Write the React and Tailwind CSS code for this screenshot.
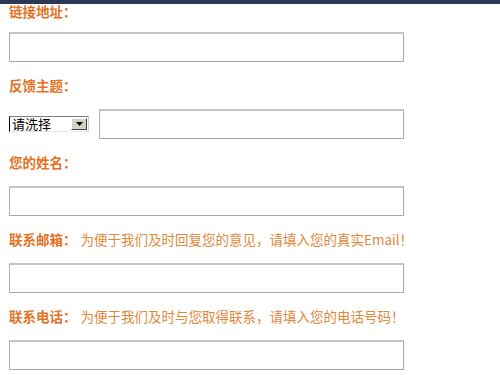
const font = { fontFamily: '"Noto Sans CJK SC", "Noto Sans", sans-serif' };

function TextBox({ className = '' }) {
  return (
    <div
      className={`h-[30px] bg-white border border-[#a9a9a9] border-t-2 border-t-[#c4c4c4] border-l-[#b0b0b0] ${className}`}
    />
  );
}

function Label({ title, hint }) {
  return (
    <div className="mt-[13px] h-[20px] leading-[20px] text-[13.5px] whitespace-nowrap">
      <span className="font-bold text-[#e4721f]">{title}：</span>
      {hint && <span className="ml-[4px] text-[#e2883a]">{hint}</span>}
    </div>
  );
}

export default function App() {
  return (
    <div className="w-[500px] h-[375px] bg-white overflow-hidden" style={font}>
      <div className="h-[4px] bg-[#293956]" />
      <div className="pl-[9px]">
        <div className="h-[14px] leading-[14px] text-[13.5px] font-bold text-[#e4721f]">链接地址：</div>
        <TextBox className="mt-[14px] w-[395px]" />

        <Label title="反馈主题" />
        <div className="mt-[14px] flex items-center h-[30px]">
          <div className="w-[80px] h-[16px] flex items-center bg-white border border-l-black border-t-[#808080] border-r-[#d4d0c8] border-b-[#e8e8e8]">
            <span className="flex-1 pl-[2px] text-[13px] leading-[14px] text-black">请洗择</span>
            <div className="w-[16px] h-[12px] mr-[1px] bg-[#d4d0c8] border border-t-white border-l-white border-r-[#404040] border-b-[#404040] flex items-center justify-center">
              <svg width="7" height="4" viewBox="0 0 7 4">
                <path d="M0 0h7L3.5 4z" fill="#000" />
              </svg>
            </div>
          </div>
          <TextBox className="ml-[10px] w-[305px]" />
        </div>

        <Label title="您的姓名" />
        <TextBox className="mt-[14px] w-[395px]" />

        <Label title="联系邮箱" hint="为便于我们及时回复您的意见，请填入您的真实Email！" />
        <TextBox className="mt-[14px] w-[395px]" />

        <Label title="联系电话" hint="为便于我们及时与您取得联系，请填入您的电话号码！" />
        <TextBox className="mt-[14px] w-[395px]" />
      </div>
    </div>
  );
}
